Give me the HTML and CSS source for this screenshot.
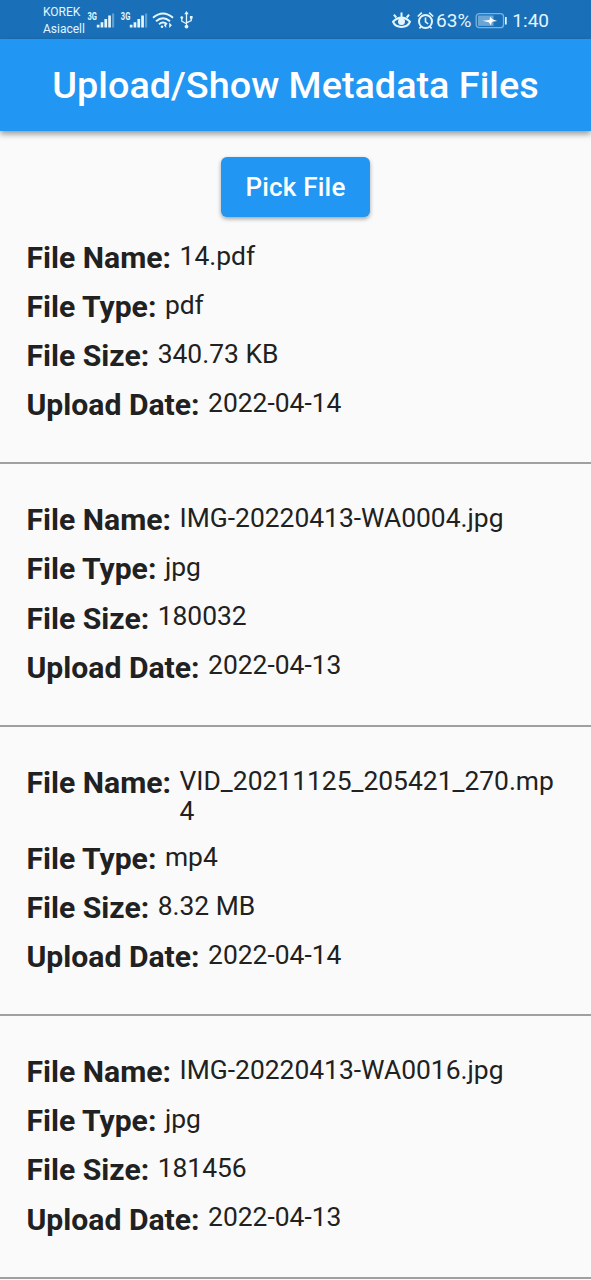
FILE: index.html
```html
<!DOCTYPE html>
<html lang="en">
<head>
<meta charset="utf-8">
<title>Upload/Show Metadata Files</title>
<link rel="stylesheet" href="styles.css">
</head>
<body>
<div class="status">
  <div class="carriers"><span>KOREK</span><span>Asiacell</span></div>
  <svg class="signals" width="108" height="22" viewBox="0 0 108 22" fill="#e3f6ff">
    <g id="cell">
      <path d="M10.800 17.500h2.700v-2.700h-2.700zM14.600 17.500h2.700v-5.200h-2.700zM18.400 17.500h2.700v-8.500h-2.700zM22.200 17.500h2.700v-12h-2.700z"/>
      <path d="M26 17.500h2.200v-14h-2.200z" opacity=".35"/>
    </g>
    <use href="#cell" x="33"/>
    <text class="net" x="1.500" y="9.500" textLength="9.500" lengthAdjust="spacingAndGlyphs">3G</text>
    <text class="net" x="34.800" y="9.500" textLength="9.500" lengthAdjust="spacingAndGlyphs">3G</text>
    <g fill="none" stroke="#e3f6ff" stroke-width="1.900">
      <path d="M67 7.800Q77 -.8 87 7.800M70 11.300Q77 5.300 84 11.300M73 14.200Q77 11 81 14.200"/>
    </g>
    <circle cx="76" cy="16.700" r="1.300"/>
    <path d="M80.200 12.500v5.500l-2.400-2.700zM83.200 12.500v5.500l2.700-2.700z"/>
    <g fill="none" stroke="#e3f6ff" stroke-width="1.300">
      <path d="M100.500 3v13M95.800 8v3.200l4.700 2.600M105.200 7.500v3.200l-4.700 2.200"/>
    </g>
    <path d="M98.300 4.300l2.200-3.300 2.200 3.300z"/>
    <circle cx="100.500" cy="16.600" r="1.900"/>
    <circle cx="95.800" cy="7.600" r="1.400"/>
    <path d="M103.900 6h2.700v2.700h-2.700z"/>
  </svg>
  <div class="right">
    <svg width="44" height="22" viewBox="0 0 44 22" fill="none" stroke="#e3f6ff" stroke-width="2">
      <path d="M2 11.700Q10.500 3.500 19 11.700Q17 17 10.500 17Q4 17 2 11.700zM10.500 6.500V2.500M5.200 7.500L2.900 4.700M15.800 7.500l2.300-2.800"/>
      <circle cx="10.500" cy="11.500" r="2.500" fill="#e3f6ff"/>
      <circle cx="34.500" cy="11.500" r="6.500"/>
      <path d="M34.500 7.500v4.300l2.700 2.200M26.800 6.500l4-3.800M42.200 6.500l-4-3.800M30 16.500l-1.500 2M39 16.500l1.500 2" stroke-width="1.600"/>
    </svg>
    <span class="percent">63%</span>
    <svg class="battery" width="33" height="18" viewBox="0 0 33 18">
      <rect x="1.200" y="1.700" width="27.300" height="14" rx="3" fill="none" stroke="#79b4de" stroke-width="1.300"/>
      <path d="M3 3.500h15.500v10.400h-15.500z" fill="#6ba6d6"/>
      <path d="M7.500 8.700l7-.8.700-3.200 2.300 2.600 4.700 1.700-5.200.8-1.200 3.400-2-3z" fill="#fff"/>
      <path d="M30 5h1.700v7.500h-1.700z" fill="#e3f6ff"/>
    </svg>
    <span class="clock">1:40</span>
  </div>
</div>
<header class="appbar"><h1>Upload/Show Metadata Files</h1></header>
<main>
  <button class="pick">Pick File</button>
  <section class="file">
    <div class="row"><b>File Name:</b><span>14.pdf</span></div>
    <div class="row"><b>File Type:</b><span>pdf</span></div>
    <div class="row"><b>File Size:</b><span>340.73 KB</span></div>
    <div class="row"><b>Upload Date:</b><span>2022-04-14</span></div>
  </section>
  <section class="file">
    <div class="row"><b>File Name:</b><span>IMG-20220413-WA0004.jpg</span></div>
    <div class="row"><b>File Type:</b><span>jpg</span></div>
    <div class="row"><b>File Size:</b><span>180032</span></div>
    <div class="row"><b>Upload Date:</b><span>2022-04-13</span></div>
  </section>
  <section class="file">
    <div class="row"><b>File Name:</b><span>VID_20211125_205421_270.mp4</span></div>
    <div class="row"><b>File Type:</b><span>mp4</span></div>
    <div class="row"><b>File Size:</b><span>8.32 MB</span></div>
    <div class="row"><b>Upload Date:</b><span>2022-04-14</span></div>
  </section>
  <section class="file">
    <div class="row"><b>File Name:</b><span>IMG-20220413-WA0016.jpg</span></div>
    <div class="row"><b>File Type:</b><span>jpg</span></div>
    <div class="row"><b>File Size:</b><span>181456</span></div>
    <div class="row"><b>Upload Date:</b><span>2022-04-13</span></div>
  </section>
</main>
</body>
</html>
```
FILE: styles.css
```css
* { box-sizing: border-box; }
body {
  margin: 0;
  height: 1280px;
  overflow: hidden;
  background: #fafafa;
  color: #212121;
  font-family: Roboto, sans-serif;
}
.status {
  height: 39px;
  padding: 0 42px 0 43px;
  display: flex;
  align-items: center;
  background: #1a70b8;
  color: #e3f6ff;
}
.carriers {
  width: 43px;
  display: flex;
  flex-direction: column;
  font-size: 12px;
  line-height: 17px;
  padding-top: 2px;
}
.signals { margin-top: 2px; }
.net { font-size: 10.5px; font-weight: 700; }
.right {
  margin-left: auto;
  display: flex;
  align-items: center;
  font-size: 19px;
  padding-top: 2px;
}
.percent { margin-left: 1px; }
.battery { margin: 0 4px; }
.appbar {
  position: relative;
  height: 92px;
  display: flex;
  align-items: center;
  justify-content: center;
  background: #2196f3;
  color: #fff;
  box-shadow: 0 3px 6px rgba(0, 0, 0, .4);
}
h1 {
  margin: 0;
  padding-bottom: 1px;
  font-size: 37.8px;
  font-weight: 500;
  white-space: nowrap;
}
main {
  display: flex;
  flex-direction: column;
  padding-top: 26px;
}
.pick {
  align-self: center;
  width: 149px;
  height: 60px;
  margin-bottom: 22.900px;
  border: 0;
  border-radius: 6px;
  background: #2196f3;
  color: #fff;
  font: 500 26px Roboto, sans-serif;
  letter-spacing: .2px;
  box-shadow: 0 2px 4px rgba(0, 0, 0, .35);
}
.file {
  display: flex;
  flex-direction: column;
  gap: 13.900px;
  padding: 0 26.500px 39.800px;
  border-bottom: 2px solid #a0a0a0;
}
.file + .file { padding-top: 38.200px; }
.row {
  display: flex;
  gap: 8.500px;
  align-items: flex-start;
}
.row b {
  flex: none;
  font-size: 30.150px;
  line-height: 35.200px;
}
.row span {
  padding-top: .8px;
  font-size: 26.420px;
  line-height: 30.700px;
  word-break: break-all;
}
```
